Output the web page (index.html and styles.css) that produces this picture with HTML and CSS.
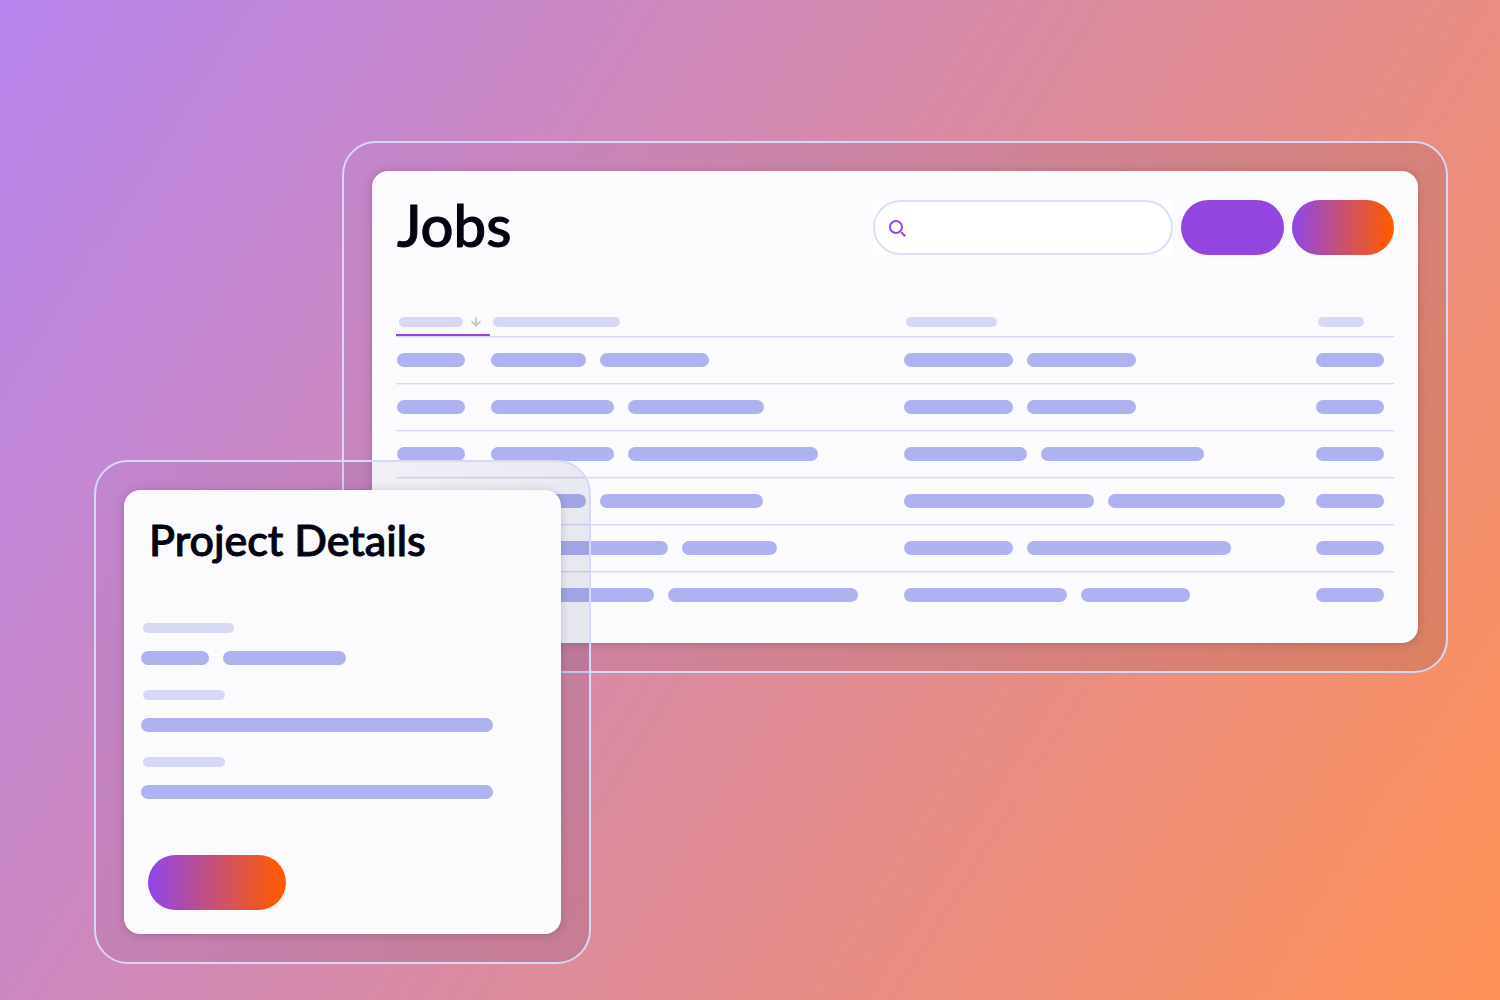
FILE: index.html
```html
<!DOCTYPE html>
<html lang="en">
<head>
<meta charset="utf-8">
<meta name="viewport" content="width=device-width, initial-scale=1">
<title>Jobs</title>
<link rel="stylesheet" href="styles.css">
</head>
<body>
<main class="stage">
  <section class="frame frame-jobs">
    <div class="card">
      <header class="toolbar">
        <h1 class="title">Jobs</h1>
        <div class="actions">
          <div class="search-slot">
            <label class="search">
              <svg class="search-icon" viewBox="0 0 20 20" aria-hidden="true"><circle cx="8" cy="9" r="6"/><path d="M13.2 14.2 17.2 18.2"/></svg>
              <input class="search-input" type="search" aria-label="Search jobs">
            </label>
          </div>
          <button class="pill pill-solid" type="button" aria-label="Filter"></button>
          <button class="pill pill-gradient" type="button" aria-label="New job"></button>
        </div>
      </header>
      <table class="jobs">
        <colgroup><col class="col-id"><col><col><col class="col-end"></colgroup>
        <thead>
          <tr>
            <th class="sorted"><div class="bars"><span class="label w-64"></span><svg class="sort-icon" viewBox="0 0 10 10" aria-hidden="true"><path d="M5 1V8.4M1.2 4.8 5 8.6 8.8 4.8"/></svg></div></th>
            <th><div class="bars"><span class="label w-127"></span></div></th>
            <th><div class="bars"><span class="label w-91"></span></div></th>
            <th><div class="bars"><span class="label w-46"></span></div></th>
          </tr>
        </thead>
        <tbody>
          <tr>
            <td><div class="bars"><span class="bar w-68"></span></div></td>
            <td><div class="bars"><span class="bar w-95"></span><span class="bar w-109"></span></div></td>
            <td><div class="bars"><span class="bar w-109"></span><span class="bar w-109"></span></div></td>
            <td><div class="bars"><span class="bar w-68"></span></div></td>
          </tr>
          <tr>
            <td><div class="bars"><span class="bar w-68"></span></div></td>
            <td><div class="bars"><span class="bar w-123"></span><span class="bar w-136"></span></div></td>
            <td><div class="bars"><span class="bar w-109"></span><span class="bar w-109"></span></div></td>
            <td><div class="bars"><span class="bar w-68"></span></div></td>
          </tr>
          <tr>
            <td><div class="bars"><span class="bar w-68"></span></div></td>
            <td><div class="bars"><span class="bar w-123"></span><span class="bar w-190"></span></div></td>
            <td><div class="bars"><span class="bar w-123"></span><span class="bar w-163"></span></div></td>
            <td><div class="bars"><span class="bar w-68"></span></div></td>
          </tr>
          <tr>
            <td><div class="bars"><span class="bar w-68"></span></div></td>
            <td><div class="bars"><span class="bar w-95"></span><span class="bar w-163"></span></div></td>
            <td><div class="bars"><span class="bar w-190"></span><span class="bar w-177"></span></div></td>
            <td><div class="bars"><span class="bar w-68"></span></div></td>
          </tr>
          <tr>
            <td><div class="bars"><span class="bar w-68"></span></div></td>
            <td><div class="bars"><span class="bar w-177"></span><span class="bar w-95"></span></div></td>
            <td><div class="bars"><span class="bar w-109"></span><span class="bar w-204"></span></div></td>
            <td><div class="bars"><span class="bar w-68"></span></div></td>
          </tr>
          <tr>
            <td><div class="bars"><span class="bar w-68"></span></div></td>
            <td><div class="bars"><span class="bar w-163"></span><span class="bar w-190"></span></div></td>
            <td><div class="bars"><span class="bar w-163"></span><span class="bar w-109"></span></div></td>
            <td><div class="bars"><span class="bar w-68"></span></div></td>
          </tr>
        </tbody>
      </table>
    </div>
  </section>

  <section class="frame frame-details">
    <div class="card">
      <h2 class="subtitle">Project Details</h2>
      <div class="fields">
        <div class="field">
          <span class="label w-91"></span>
          <div class="bars"><span class="bar w-68"></span><span class="bar w-123"></span></div>
        </div>
        <div class="field">
          <span class="label w-82"></span>
          <div class="bars"><span class="bar w-352"></span></div>
        </div>
        <div class="field">
          <span class="label w-82"></span>
          <div class="bars"><span class="bar w-352"></span></div>
        </div>
      </div>
      <button class="pill pill-gradient pill-wide" type="button" aria-label="Open project"></button>
    </div>
  </section>
</main>
</body>
</html>
```

FILE: styles.css
```css
:root {
  --ink: #020210;
  --surface: #fbfbfe;
  --line: #d7d8f5;
  --bar: #aeb2f0;
  --purple: #9447e0;
  --orange: #ff5a00;
}

* { box-sizing: border-box; }

body {
  margin: 0;
  font-family: Lato, "Open Sans", sans-serif;
  color: var(--ink);
}

/* Both windows share one grid cell so the details window overlaps the jobs window */
.stage {
  display: grid;
  align-items: start;
  min-height: 100vh;
  background: linear-gradient(122deg, #b684ee, #ff9155);
}

.frame {
  grid-area: 1 / 1;
  padding: 28px;
  border: 2px solid var(--line);
  border-radius: 34px;
  background: linear-gradient(122deg, rgba(2, 2, 80, 0.01), rgba(2, 2, 80, 0.11)) border-box;
}

.frame-jobs {
  margin: 141px 52px 0 342px;
  background: linear-gradient(122deg, rgba(2, 2, 48, 0.01), rgba(2, 2, 48, 0.11)) border-box;
}

.frame-details {
  width: 497px;
  margin: 460px 0 36px 94px;
}

.card {
  padding: 24px;
  border-radius: 16px;
  background: var(--surface);
  box-shadow: 0 1px 10px rgba(0, 0, 0, 0.18);
}

.toolbar {
  display: flex;
  align-items: flex-start;
  justify-content: space-between;
  height: 66px;
  margin-bottom: 45px;
}

.title, .subtitle {
  margin: 0;
  padding-left: 1px;
  font-weight: 500;
  -webkit-text-stroke: 1px var(--ink);
}

.title { font-size: 58px; line-height: 60px; }
.subtitle { font-size: 43px; line-height: 52px; }

.actions { display: flex; gap: 8px; padding-top: 5px; }

.search-slot { background: #fff; }

.search {
  display: flex;
  align-items: center;
  gap: 8px;
  width: 300px;
  height: 55px;
  padding: 0 13px;
  border: 2px solid #dedef8;
  border-radius: 28px;
}

.search-icon {
  flex: none;
  width: 20px;
  height: 20px;
  fill: none;
  stroke: var(--purple);
  stroke-width: 2;
}

.search-input {
  flex: 1;
  min-width: 0;
  border: 0;
  outline: 0;
  background: transparent;
  font: inherit;
  font-size: 16px;
}

.pill {
  width: 102px;
  height: 55px;
  padding: 0;
  border: 0;
  border-radius: 28px;
}

.pill-solid { width: 103px; background: var(--purple); }
.pill-gradient { background: linear-gradient(92deg, var(--purple) 5%, var(--orange) 96%); }
.pill-wide { display: block; width: 138px; }

.jobs {
  width: 100%;
  table-layout: fixed;
  border-collapse: separate;
  border-spacing: 0;
}

.col-id { width: 94px; }
.col-end { width: 79px; }

.jobs th, .jobs td {
  padding: 0 0 0 1px;
  border-bottom: 1px solid var(--line);
  box-shadow: 0 1px #eeeefb;
}

.jobs th { height: 31px; padding: 2px 0 0 3px; }
.jobs td { height: 47px; }
.jobs tbody tr:last-child td { border-bottom-color: transparent; box-shadow: none; }
.jobs .sorted { box-shadow: inset 0 -2px var(--purple), 0 1px #eeeefb; }

.bars { display: flex; align-items: center; gap: 14px; }
.jobs th .bars { gap: 8px; }

.sort-icon {
  width: 10px;
  height: 10px;
  fill: none;
  stroke: #c8c8cc;
  stroke-width: 2;
  stroke-linecap: round;
}

.bar, .label { display: block; flex: none; }
.bar { height: 14px; border-radius: 7px; background: var(--bar); }
.label { height: 10px; border-radius: 5px; background: var(--line); }

.fields {
  display: grid;
  gap: 25px;
  margin: 57px 0 56px -7px;
}

.field { display: grid; gap: 18px; }
.field .label { margin-left: 2px; }

.w-46 { width: 46px; }
.w-64 { width: 64px; }
.w-68 { width: 68px; }
.w-82 { width: 82px; }
.w-91 { width: 91px; }
.w-95 { width: 95px; }
.w-109 { width: 109px; }
.w-123 { width: 123px; }
.w-127 { width: 127px; }
.w-136 { width: 136px; }
.w-163 { width: 163px; }
.w-177 { width: 177px; }
.w-190 { width: 190px; }
.w-204 { width: 204px; }
.w-352 { width: 352px; }
```
